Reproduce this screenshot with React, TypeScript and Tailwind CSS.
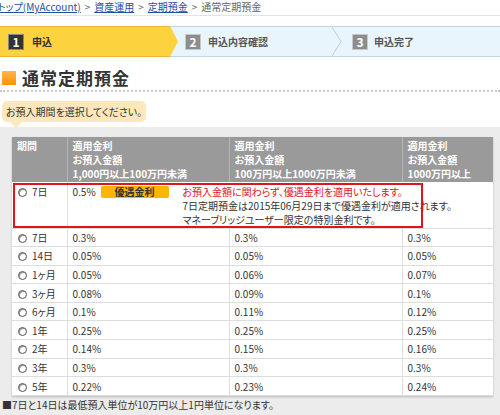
import React from 'react';

const rates: [string, string, string, string][] = [
  ['7日', '0.3%', '0.3%', '0.3%'],
  ['14日', '0.05%', '0.05%', '0.05%'],
  ['1ヶ月', '0.05%', '0.06%', '0.07%'],
  ['3ヶ月', '0.08%', '0.09%', '0.1%'],
  ['6ヶ月', '0.1%', '0.11%', '0.12%'],
  ['1年', '0.25%', '0.25%', '0.25%'],
  ['2年', '0.14%', '0.15%', '0.16%'],
  ['3年', '0.3%', '0.3%', '0.3%'],
  ['5年', '0.22%', '0.23%', '0.24%'],
];

function Radio() {
  return <span className="inline-block w-[9px] h-[9px] rounded-full border border-[#555] bg-white shadow-[inset_1px_1px_0_#999] mr-[5px] align-[-1px]" />;
}

function StepNum({ n, dark }: { n: number; dark?: boolean }) {
  return (
    <span className={`flex items-center justify-center w-[16px] h-[16px] border text-white text-[12px] font-bold leading-none ${dark ? 'bg-[#333] border-[#888]' : 'bg-[#8d8d8d] border-[#c8c8c8]'}`}>{n}</span>
  );
}

export default function App() {
  return (
    <div className="w-[500px] h-[415px] overflow-hidden bg-white text-[#333] font-['Noto_Sans_CJK_JP','Noto_Sans',sans-serif] [font-feature-settings:'palt']">
      <div className="h-[16px] border-b border-[#dbe5ee] text-[10px] leading-[14px] whitespace-nowrap -ml-[2px] text-[#666]">
        <a className="text-[#1d4f9e] underline">トップ(MyAccount)</a><span className="mx-[4px]">&gt;</span>
        <a className="text-[#1d4f9e] underline">資産運用</a><span className="mx-[4px]">&gt;</span>
        <a className="text-[#1d4f9e] underline">定期預金</a><span className="mx-[4px]">&gt;</span>
        <span>通常定期預金</span>
      </div>

      <div className="mt-[10px] h-[31px] flex items-stretch bg-[#e9f5fd] border-y border-[#bfd6e8]">
        <div className="-my-px w-[178px] flex items-center gap-[8px] pl-[8px] bg-[#fdd23f] border-y border-[#f0b43a] [clip-path:polygon(0_0,170px_0,178px_50%,170px_100%,0_100%)]">
          <StepNum n={1} dark />
          <span className="text-[10px] font-bold">申込</span>
        </div>
        <div className="w-[166px] flex items-center gap-[7px] pl-[7px] relative">
          <StepNum n={2} />
          <span className="text-[10px] font-bold text-[#555]">申込内容確認</span>
          <svg className="absolute right-[2px] top-0 h-full w-[10px]" viewBox="0 0 10 31" preserveAspectRatio="none">
            <polyline points="0,0 9,15.5 0,31" fill="none" stroke="#b5cde0" strokeWidth="1" />
          </svg>
        </div>
        <div className="flex items-center gap-[6px] pl-[8px]">
          <StepNum n={3} />
          <span className="text-[10px] font-bold text-[#555]">申込完了</span>
        </div>
      </div>

      <div className="mt-[10px] flex items-center gap-[6px] pl-[2px] pb-[1px] border-b-2 border-dotted border-[#c8c8c8]">
        <span className="w-[14px] h-[14px] bg-gradient-to-b from-[#ffb640] to-[#ff9000]" />
        <h1 className="text-[17px] leading-[22px] font-bold tracking-[1px]">通常定期預金</h1>
      </div>

      <div className="mt-[9px] ml-[2px] relative z-10 w-fit bg-[#fde8bd] rounded-[5px] px-[4px] h-[21px] text-[10px] leading-[21px]">
        お預入期間を選択してください。
        <span className="absolute left-[8px] -bottom-[6px] w-0 h-0 border-x-[6px] border-x-transparent border-t-[6px] border-t-[#fde8bd]" />
      </div>

      <div className="mt-[5px] bg-[#ececec] pt-[10px] pl-[12px] pr-[7px] h-[300px]">
        <table className="w-[481px] table-fixed border-collapse text-[10px] bg-white shadow-[0_1px_2px_#bbb]">
          <colgroup>
            <col className="w-[55px]" />
            <col className="w-[162px]" />
            <col className="w-[173px]" />
            <col className="w-[91px]" />
          </colgroup>
          <thead>
            <tr className="bg-[#9a9a9a] text-white font-bold leading-[14px] align-top">
              <th className="text-left font-bold px-[5px] pt-[2px] pb-[1px] border-r border-[#b5b5b5]">期間</th>
              <th className="text-left font-bold px-[5px] pt-[2px] pb-[1px] border-r border-[#b5b5b5]">適用金利<br />お預入金額<br />1,000円以上100万円未満</th>
              <th className="text-left font-bold px-[5px] pt-[2px] pb-[1px] border-r border-[#b5b5b5]">適用金利<br />お預入金額<br />100万円以上1000万円未満</th>
              <th className="text-left font-bold px-[5px] pt-[2px] pb-[1px]">適用金利<br />お預入金額<br />1000万円以上</th>
            </tr>
          </thead>
          <tbody>
            <tr className="align-top leading-[14px]">
              <td className="px-[6px] pt-[3px] h-[46px] border-r border-b border-[#ddd] relative">
                <Radio />7日
                <span className="absolute left-[1px] top-[1px] w-[410px] h-[45px] border-2 border-[#e0141e] pointer-events-none" />
              </td>
              <td colSpan={3} className="pl-[5px] pt-[3px] border-b border-[#ddd]">
                <div className="flex">
                  <span className="w-[28px]">0.5%</span>
                  <span className="w-[68px] h-[12px] mt-[1px] rounded-[2px] bg-[#ffb400] text-center text-[10px] leading-[12px] font-bold text-[#333]">優遇金利</span>
                  <div className="ml-[14px]">
                    <div className="text-[#e0141e]">お預入金額に関わらず、優遇金利を適用いたします。</div>
                    <div>7日定期預金は2015年06月29日まで優遇金利が適用されます。</div>
                    <div>マネーブリッジユーザー限定の特別金利です。</div>
                  </div>
                </div>
              </td>
            </tr>
            {rates.map(([term, a, b, c]) => (
              <tr key={term} className="h-[18.6px] leading-[17px]">
                <td className="px-[6px] border-r border-b border-[#ddd] whitespace-nowrap"><Radio />{term}</td>
                <td className="px-[5px] border-r border-b border-[#ddd]">{a}</td>
                <td className="px-[5px] border-r border-b border-[#ddd]">{b}</td>
                <td className="px-[5px] border-b border-[#ddd]">{c}</td>
              </tr>
            ))}
          </tbody>
        </table>
        <p className="-ml-[10px] mt-[2px] text-[10px] leading-[13px]">■7日と14日は最低預入単位が10万円以上1円単位になります。</p>
      </div>
    </div>
  );
}
